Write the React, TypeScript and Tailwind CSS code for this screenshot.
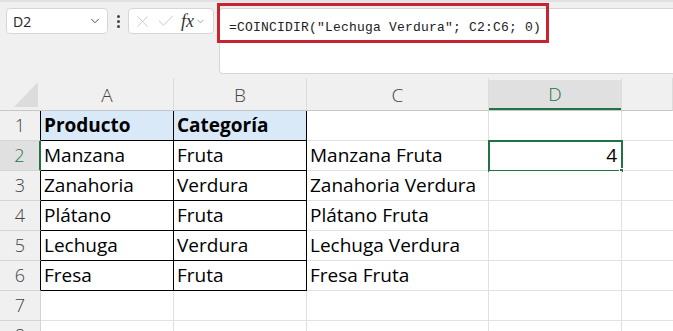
import { ChevronDown, X, Check } from "lucide-react";

const cols = ["A", "B", "C", "D", ""];

const rows = [
    ["Producto", "Categoría", "", ""],
    ["Manzana", "Fruta", "Manzana Fruta", "4"],
    ["Zanahoria", "Verdura", "Zanahoria Verdura", ""],
    ["Plátano", "Fruta", "Plátano Fruta", ""],
    ["Lechuga", "Verdura", "Lechuga Verdura", ""],
    ["Fresa", "Fruta", "Fresa Fruta", ""],
    ["", "", "", ""],
    ["", "", "", ""],
];

export default function App() {
    return (
        <div
            className="w-[673px] h-[331px] overflow-hidden bg-[#f0f0f0] text-black"
            style={{ fontFamily: '"Open Sans", "Noto Sans", sans-serif' }}
        >
            {/* formula bar */}
            <div className="relative h-[78px] border-t-2 border-[#e2e2e2] pt-[6px] flex items-start">
                <div className="ml-[6px] w-[102px] h-[26px] bg-white border border-[#d6d6d6] rounded-[4px] flex items-center justify-between pl-[6px] pr-[5px]">
                    <span className="text-[14px] text-[#222]">D2</span>
                    <ChevronDown size={14} strokeWidth={1.6} className="text-[#444]" />
                </div>
                <div className="w-[20px] h-[26px] flex flex-col items-center justify-center gap-[2px]">
                    <span className="w-[3px] h-[3px] rounded-full bg-[#444]" />
                    <span className="w-[3px] h-[3px] rounded-full bg-[#444]" />
                    <span className="w-[3px] h-[3px] rounded-full bg-[#444]" />
                </div>
                <div className="w-[86px] h-[26px] bg-white border border-[#d6d6d6] rounded-[4px] flex items-center pl-[4px]">
                    <X size={19} strokeWidth={1.1} className="text-[#c4c4c4]" />
                    <Check size={20} strokeWidth={1.1} className="text-[#c4c4c4] ml-[4px]" />
                    <span
                        className="ml-[5px] text-[18px] italic text-[#333] leading-none"
                        style={{ fontFamily: '"Liberation Serif", serif' }}
                    >
                        fx
                    </span>
                    <ChevronDown size={11} strokeWidth={1.6} className="text-[#888] ml-[1px]" />
                </div>
                <div className="ml-[5px] flex-1 h-[66px] bg-white border border-r-0 border-[#d6d6d6] rounded-bl-[4px] rounded-tl-[4px] pl-[9px] pt-[4px]">
                    <span
                        className="text-[13px] tracking-[0.2px] text-[#222] whitespace-pre"
                        style={{ fontFamily: '"Liberation Mono", monospace' }}
                    >
                        =COINCIDIR("Lechuga Verdura"; C2:C6; 0)
                    </span>
                </div>
                <div className="absolute left-[217px] top-[1px] w-[332px] h-[40px] border-[3px] border-[#c8232f]" />
            </div>

            {/* grid */}
            <div className="grid grid-cols-[41px_133px_133px_182px_133px_1fr]">
                <div className="h-[33px] border-b border-[#c6c6c6] flex items-end justify-end pb-[3px] pr-[3px]">
                    <svg width="24" height="25" viewBox="0 0 24 25">
                        <polygon points="24,0 24,25 0,25" fill="#dcdcdc" />
                    </svg>
                </div>
                {cols.map((c, k) => (
                    <div
                        key={k}
                        className="h-[33px] pt-[2px] border-b border-[#c6c6c6] border-r border-r-[#dcdcdc]"
                    >
                        <div
                            className={
                                c === "D"
                                    ? "h-full bg-[#e0e0e0] border-b-2 border-[#217346] text-[#217346] flex items-center justify-center text-[19px] font-light"
                                    : "h-full text-[#444] flex items-center justify-center text-[19px] font-light"
                            }
                        >
                            {c}
                        </div>
                    </div>
                ))}

                {rows.map((r, i) => {
                    const n = i + 1;
                    const inTable = n <= 6;
                    return [
                        <div
                            key={"h" + n}
                            className={
                                n === 2
                                    ? "h-[30px] bg-[#e0e0e0] border-r-2 border-r-[#217346] border-b border-b-[#d4d4d4] flex items-center justify-center text-[18px] text-[#217346] font-light"
                                    : inTable
                                      ? "h-[30px] border-r border-r-[#000] border-b border-b-[#d4d4d4] flex items-center justify-center text-[18px] text-[#444] font-light"
                                      : "h-[30px] border-r border-r-[#d4d4d4] border-b border-b-[#d4d4d4] flex items-center justify-center text-[18px] text-[#444] font-light"
                            }
                        >
                            {n}
                        </div>,
                        ...[0, 1].map((j) => (
                            <div
                                key={n + "-" + j}
                                className={
                                    n === 1
                                        ? "h-[30px] bg-[#dae9f8] border-r border-b border-black flex items-center pl-[3px] text-[19px] font-bold"
                                        : inTable
                                          ? "h-[30px] bg-white border-r border-b border-black flex items-center pl-[3px] text-[19px]"
                                          : "h-[30px] bg-white border-r border-b border-[#e1e1e1] flex items-center pl-[3px] text-[19px]"
                                }
                            >
                                {r[j]}
                            </div>
                        )),
                        <div
                            key={n + "-c"}
                            className="h-[30px] bg-white border-r border-b border-[#e1e1e1] flex items-center pl-[3px] text-[19px] whitespace-nowrap"
                        >
                            {r[2]}
                        </div>,
                        <div
                            key={n + "-d"}
                            className="relative h-[30px] bg-white border-r border-b border-[#e1e1e1] flex items-center justify-end pr-[4px] text-[19px]"
                        >
                            {r[3]}
                            {n === 2 && (
                                <div className="absolute -left-[1px] -top-[1px] w-[135px] h-[32px] border-2 border-[#217346]">
                                    <div className="absolute -right-[3px] -bottom-[3px] w-[5px] h-[5px] bg-[#217346] border border-white" />
                                </div>
                            )}
                        </div>,
                        <div key={n + "-e"} className="h-[30px] bg-white border-b border-[#e1e1e1]" />,
                    ];
                })}
            </div>
        </div>
    );
}
